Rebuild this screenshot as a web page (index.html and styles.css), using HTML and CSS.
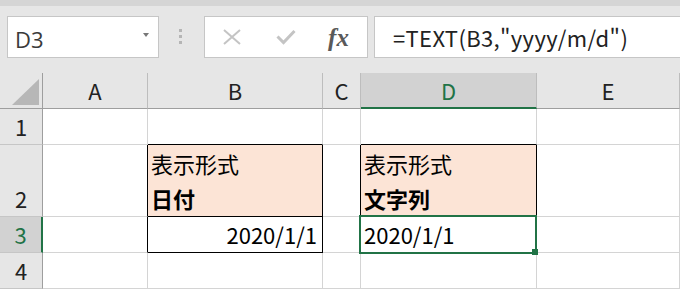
FILE: index.html
```html
<!DOCTYPE html>
<html lang="ja">
<head>
<meta charset="utf-8">
<title>Excel TEXT</title>
<link rel="stylesheet" href="styles.css">
</head>
<body>
<div class="app">
  <div class="topband"></div>
  <div class="toolbar">
    <div class="namebox"><span class="ref">D3</span><span class="caret"></span></div>
    <div class="grip"><i></i><i></i><i></i></div>
    <div class="btns">
      <div class="slot">
        <svg class="ico" width="18" height="16" viewBox="0 0 18 16"><path d="M1 1 L17 15 M17 1 L1 15" stroke="#c4c4c4" stroke-width="2" fill="none"/></svg>
      </div>
      <div class="slot">
        <svg class="ico" width="20" height="16" viewBox="0 0 20 16"><path d="M1.5 7.5 L7.5 13.5 L18.5 2" stroke="#c4c4c4" stroke-width="3" fill="none"/></svg>
      </div>
      <div class="slot"><span class="fx">fx</span></div>
    </div>
    <div class="formula">=TEXT(B3,"yyyy/m/d")</div>
  </div>
  <div class="sheet">
    <div class="c h corner"><svg width="27" height="26" viewBox="0 0 27 26"><polygon points="27,0 27,26 0,26" fill="#b7b7b7"/></svg></div>
    <div class="c h">A</div>
    <div class="c h">B</div>
    <div class="c h">C</div>
    <div class="c h sel-c">D</div>
    <div class="c h">E</div>

    <div class="c rh">1</div>
    <div class="c"></div>
    <div class="c bk-b"></div>
    <div class="c"></div>
    <div class="c bk-b"></div>
    <div class="c"></div>

    <div class="c rh">2</div>
    <div class="c bk-r"></div>
    <div class="c fill bk-r bk-b two"><span>表示形式</span><span class="b">日付</span></div>
    <div class="c bk-r"></div>
    <div class="c fill bk-r bk-b two"><span>表示形式</span><span class="b">文字列</span></div>
    <div class="c"></div>

    <div class="c rh sel-r">3</div>
    <div class="c bk-r"></div>
    <div class="c bk-r bk-b right">2020/1/1</div>
    <div class="c"></div>
    <div class="c active">2020/1/1<span class="frame"></span><span class="handle"></span></div>
    <div class="c"></div>

    <div class="c rh">4</div>
    <div class="c"></div>
    <div class="c"></div>
    <div class="c"></div>
    <div class="c"></div>
    <div class="c"></div>
  </div>
</div>
</body>
</html>
```
FILE: styles.css
```css
* { box-sizing: border-box; margin: 0; padding: 0; }
html, body { margin: 0; width: 680px; height: 289px; overflow: hidden; background: #e6e6e6; }
body { font-family: "Noto Sans CJK JP", "Noto Sans", sans-serif; }
.app { width: 680px; height: 289px; display: flex; flex-direction: column; }
.topband { height: 6px; flex: none; background: #d5d5d5; }
.toolbar { height: 67px; flex: none; display: flex; align-items: flex-start; padding: 10px 0 0 7px; background: #e6e6e6; }
.namebox { width: 152px; height: 42px; flex: none; background: #fff; border: 1px solid #c6c6c6; display: flex; align-items: center; justify-content: space-between; padding: 0 9px 0 7px; }
.ref { font-family: "Open Sans", "Noto Sans", sans-serif; font-size: 22px; color: #3a3a3a; line-height: 40px; padding-top: 3px; }
.caret { width: 0; height: 0; border-left: 3.5px solid transparent; border-right: 3.5px solid transparent; border-top: 4px solid #777; margin-top: -4px; }
.grip { flex: none; margin: 13px 0 0 20px; display: flex; flex-direction: column; gap: 3px; }
.grip i { display: block; width: 3px; height: 3px; background: #b5b5b5; }
.btns { flex: none; margin-left: 22px; width: 164px; height: 42px; background: #fff; border: 1px solid #c6c6c6; display: flex; }
.slot { width: 54px; display: flex; align-items: center; justify-content: center; }
.fx { font-family: "Liberation Serif", serif; font-style: italic; font-weight: bold; font-size: 25px; color: #595959; line-height: 1; padding-right: 3px; }
.formula { flex: 1; margin-left: 6px; height: 42px; background: #fff; border: 1px solid #c6c6c6; border-right: none; padding-left: 18px; font-size: 22px; line-height: 40px; color: #222; white-space: nowrap; letter-spacing: 0.35px; }

.sheet { flex: none; display: grid; grid-template-columns: 43px 105px 175px 38px 176px 1fr; grid-template-rows: 36px 36px 72px 36px 36px; background: #fff; }
.c { border-right: 1px solid #d4d4d4; border-bottom: 1px solid #d4d4d4; font-size: 22px; line-height: 35px; color: #000; padding: 0 3px; display: flex; align-items: flex-end; white-space: nowrap; }
.h { background: #e6e6e6; border-right-color: #bdbdbd; border-bottom-color: #9e9e9e; justify-content: center; align-items: center; color: #222; padding: 0; }
.corner { justify-content: flex-end; align-items: flex-end; padding: 0 3px 3px 0; border-right-color: #9e9e9e; }
.rh { background: #e6e6e6; border-right-color: #9e9e9e; border-bottom-color: #c6c6c6; justify-content: center; color: #222; padding: 0; }
.sel-c { background: #d2d2d2; color: #217346; border-bottom: 2px solid #217346; }
.sel-r { background: #d2d2d2; color: #217346; border-right: 2px solid #217346; }
.fill { background: #fce4d6; }
.bk-r { border-right-color: #000; }
.bk-b { border-bottom-color: #000; }
.two { flex-direction: column; justify-content: flex-end; align-items: flex-start; }
.b { font-weight: bold; }
.right { justify-content: flex-end; padding-right: 5px; }
.active { position: relative; }
.frame { position: absolute; left: -2px; top: -2px; width: 178px; height: 39px; border: 2px solid #217346; }
.handle { position: absolute; left: 171px; top: 32px; width: 6px; height: 6px; background: #217346; }
```
